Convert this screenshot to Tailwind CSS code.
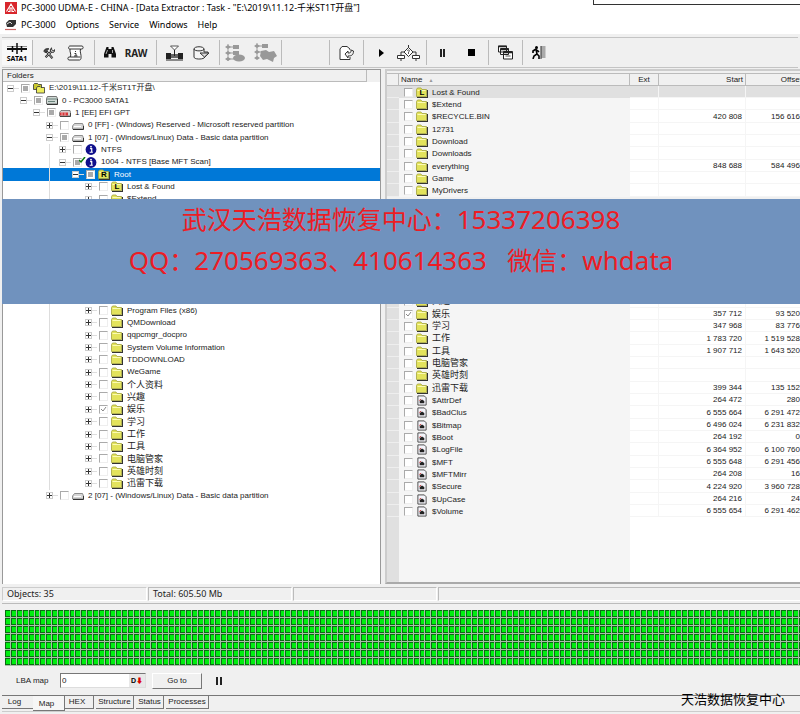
<!DOCTYPE html>
<html lang="zh-CN">
<head>
	<meta charset="UTF-8">
	<title>PC-3000 UDMA-E</title>
	<script src="https://cdn.jsdelivr.net/npm/@tailwindcss/browser@4"></script>
</head>
<body class="min-h-screen flex flex-col overflow-hidden bg-[#f0f0f0] text-[#222] font-['Liberation_Sans','Noto_Sans_CJK_SC',sans-serif] text-[8px] leading-3">

	<!-- Shared icons -->
	<svg class="hidden">
		<symbol id="folder" viewBox="0 0 12 11">
			<path d="M1 10.500h10.500V3" fill="none" stroke="#333" stroke-width="1.200"/>
			<path d="M.5 9.500V2.500l1-1.500h3.500l1 1.500h4.500v7z" fill="#e3e35c" stroke="#a3a33e" stroke-width=".8"/>
			<path d="M1.500 3.500h8" stroke="#fbfbb4"/>
		</symbol>
		<symbol id="folders" viewBox="0 0 12 11">
			<path d="M.5 6.500V1.500L1.500.500h3l1 1h3v5z" fill="#c9c92e" stroke="#333" stroke-width=".8"/>
			<path d="M3.500 10V5l1-1.500h2.500l1 1h3.500V10z" fill="#eeee5e" stroke="#333" stroke-width=".8"/>
		</symbol>
		<symbol id="disk" viewBox="0 0 12 11">
			<path d="M1.500 1.500h9l1 2v5.500h-11V3.500z" fill="#cfd8d4" stroke="#555" stroke-width=".8"/>
			<path d="M1 9.500h10.500V4" fill="none" stroke="#333"/>
			<path d="M1 4h10M2 6.500h7" stroke="#4d6b62" stroke-width=".8"/>
		</symbol>
		<symbol id="diskred" viewBox="0 0 12 11">
			<path d="M2 3.500h9l.5 2v3.500h-11v-3.500z" fill="#d8d0d0" stroke="#666" stroke-width=".8"/>
			<path d="M1 9.500h10.500V6" fill="none" stroke="#444"/>
			<path d="M1 5.500h8v3h-8z" fill="#d8373a"/>
			<path d="M3 5.500v3M6 5.500v3" stroke="#fff" stroke-width=".6"/>
		</symbol>
		<symbol id="part" viewBox="0 0 12 11">
			<path d="M.5 6l2-2.500h8l1 2.500v3h-11z" fill="#d6d6d6" stroke="#777" stroke-width=".8"/>
			<path d="M1 9.500h10.500V6" fill="none" stroke="#333"/>
			<path d="M2 6.500h7" stroke="#fff"/>
		</symbol>
		<symbol id="info" viewBox="0 0 12 12">
			<circle cx="6" cy="6" r="5.900" fill="#10108c"/>
			<path d="M5 5h1.800v4M4.500 9h3.500" fill="none" stroke="#fff" stroke-width="1.300"/>
			<circle cx="6" cy="2.900" r="1" fill="#fff"/>
		</symbol>
		<symbol id="file" viewBox="0 0 12 12">
			<path d="M1.500 1h7l2 2v8h-9z" fill="#f4f4fa" stroke="#444"/>
			<path d="M3.500 9V6.500L6 5l2.500 1.500V9z" fill="#222"/>
			<path d="M3 6l2-1.500" stroke="#c33"/>
		</symbol>
	</svg>

	<!-- Title bar -->
	<header class="bg-white font-['Noto_Sans','Noto_Sans_CJK_SC',sans-serif] text-[9px] text-black">
		<div class="flex h-4 items-center gap-1 pl-[5px]">
			<svg class="size-3" viewBox="0 0 12 12"><path d="M0 0h12v12H0z" fill="#d8262c"/><path d="M1.500 9.500L6 2l4.500 7.500M3 9.500h2V6h2v3.500h2" fill="none" stroke="#fff" stroke-width="1.100"/></svg>
			<h1 class="whitespace-nowrap">PC-3000 UDMA-E - CHINA - [Data Extractor : Task - "E:\2019\11.12-千米ST1T开盘"]</h1>
			<div class="ml-auto h-[5px] w-[26%] self-start border-b border-l border-[#333]"></div>
		</div>
		<nav class="flex h-[18px] items-center gap-2.5 pl-[5px]">
			<svg class="-mr-1.5 size-3" viewBox="0 0 12 12"><path d="M1 4l3-3h7v4l-3 3H2z" fill="#333"/><path d="M2 5l3-2 2 2" stroke="#ddd" fill="none"/><path d="M0 10.500h11" stroke="#c66" stroke-width="1.200"/></svg>
			<a href="#">PC-3000</a>
			<a href="#">Options</a>
			<a href="#">Service</a>
			<a href="#">Windows</a>
			<a href="#">Help</a>
		</nav>
	</header>

	<!-- Toolbar -->
	<div class="mx-0.5 mt-[3px] flex h-[31px] items-stretch border-y border-[#c4c4c4] py-0.5 font-['Noto_Sans',sans-serif]">
		<div class="flex w-[31px] items-center justify-center border-r border-[#bbb] bg-[#f8f8f8]">
			<button class="flex flex-col items-center text-[7px] leading-[7px] font-bold text-black" aria-label="SATA1">
				<svg class="h-3 w-5" viewBox="0 0 20 12"><path d="M0 6h20" stroke="#111" stroke-width="2"/><path d="M0 3.500h20" stroke="#777" stroke-width=".8"/><path d="M10 0v11" stroke="#111" stroke-width="1.500"/><path d="M5.500 3v6M14.500 3v6" stroke="#111" stroke-width="1.500"/></svg>
				SATA1
			</button>
		</div>
		<div class="flex w-[62px] items-center justify-around border-r border-[#bbb] px-1">
			<button aria-label="Utilities"><svg class="size-3" viewBox="0 0 14 14"><path d="M3 12l7-7M4 5l7 8" stroke="#222" stroke-width="2.600"/><path d="M3 12l7-7M4 5l7 8" stroke="#eee" stroke-width=".8"/><path d="M1 5c0-2 3-4 6-3L4.500 4.500 3 7z" fill="#444" stroke="#222" stroke-width=".8"/><path d="M10 1c-2 1-2 4 0 5s4 0 3.500-3L12 4.500 10 3z" fill="#ccc" stroke="#222"/></svg></button>
			<button aria-label="Report"><svg class="h-4 w-[17px]" viewBox="0 0 17 16"><path d="M3 1h12c1.500 0 1.500 3 0 3h-1.500c-1 3 1 5 .5 9 0 1-.5 2-1.500 2H2c-1.500 0-1.500-3 0-3h1.500c1-3-1-5-.5-8H2.500C1 4 1.500 1 3 1z" fill="#fff" stroke="#333"/><path d="M3 4h10.500M3.500 12H13M8.500 6v1M7.500 8.500h1.500v2.500M7 11h3.500" fill="none" stroke="#333"/></svg></button>
		</div>
		<div class="flex w-[62px] items-center justify-around border-r border-[#bbb] px-1">
			<button aria-label="Search"><svg class="h-[11px] w-3" viewBox="0 0 12 11"><path d="M2.500 0h2v2h3V0h2l2.500 7v3.500H7.500V7h-3v3.500H0V7z" fill="#111"/><path d="M3.500 3L2 7M8.500 3v3" stroke="#eee" stroke-width=".7"/></svg></button>
			<button class="text-[10px] font-bold text-[#222]">RAW</button>
		</div>
		<div class="flex w-[63px] items-center justify-around border-r border-[#bbb] px-1">
			<button aria-label="Load map"><svg class="h-4 w-[17px]" viewBox="0 0 17 16"><path d="M4.500 1h8l-4 4z" fill="#fff" stroke="#555"/><path d="M0 8h5v1h7V8h5v6h-5v-1H5v1H0z" fill="#222"/><path d="M5 9v4h7V9z" fill="#666"/><path d="M8.500 5v6M0 15h17" stroke="#222"/></svg></button>
			<button aria-label="Save map"><svg class="h-3.5 w-[17px]" viewBox="0 0 17 14"><path d="M1 3c0-3 10-3 10 0v3h4v2l-4 4c-2 1.500-10 1.500-10-1zM1 3c0 2.500 10 2.500 10 0" fill="#f6f6f6" stroke="#333"/><path d="M7 7h9l-4.500 4z" fill="#ddd" stroke="#333"/></svg></button>
		</div>
		<div class="flex w-[62px] items-center justify-around border-r border-[#bbb]">
			<button aria-label="Expand map" disabled><svg class="h-[18px] w-5" viewBox="0 0 20 18"><path d="M3 0v17M3 3h8M3 9h8M3 15h8" stroke="#999"/><path d="M0 3l3-2 3 2-3 2zM0 9l3-2 3 2-3 2zM0 15l3-2 3 2-3 2zM8 1h6v4H8zM8 7h6v4H8z" fill="#999"/><ellipse cx="14" cy="14" rx="6" ry="3.500" fill="#999"/></svg></button>
			<button aria-label="Build map" disabled><svg class="h-[19px] w-[23px]" viewBox="0 0 23 19"><path d="M3 0v14M3 3h8M3 9h8" stroke="#999"/><path d="M0 3l3-2 3 2-3 2zM0 9l3-2 3 2-3 2zM0 15l3-2 3 2-3 2zM8 1h6v4H8zM7 8l5-1 3 2 5-1 3 5-3 2-1 4-6-3-4 1-3-4z" fill="#999"/></svg></button>
		</div>
		<div class="w-12 border-r border-[#bbb]"></div>
		<div class="flex w-[34px] items-center justify-center border-r border-[#bbb]">
			<button aria-label="Export"><svg class="h-3.5 w-4" viewBox="0 0 16 14"><path d="M11 4V3L8 .5H3L1 3v10.500h10V11" fill="#fff" stroke="#333"/><path d="M6 8l3-3v2c3 0 3-1 3-3l2.500 1c0 4-2 5-5.500 5v2z" fill="#eee" stroke="#333"/></svg></button>
		</div>
		<div class="flex w-[63px] items-center justify-around border-r border-[#bbb] pl-2">
			<button aria-label="Start"><svg class="h-2 w-[5px]" viewBox="0 0 5 8"><path d="M0 0l5 4-5 4z" fill="#000"/></svg></button>
			<button aria-label="Step"><svg class="h-4 w-[23px]" viewBox="0 0 23 16"><path d="M11.500 0v3M7 7H4v4M16 7h3v4M4 13v3M19 13v3" stroke="#333" fill="none"/><path d="M11.500 2.500L16 7l-4.500 4.500L7 7zM.5 10.500h7v3h-7zM15.500 10.500h7v3h-7z" fill="#fff" stroke="#333"/><path d="M10.500 6c0-1.500 2-1.500 2 0l-1 1v2" fill="none" stroke="#333" stroke-width=".8"/></svg></button>
		</div>
		<div class="flex w-[62px] items-center justify-around border-r border-[#bbb] px-0.5">
			<button aria-label="Pause"><svg class="h-2 w-[5px]" viewBox="0 0 5 8"><path d="M0 0h2v8H0zM3 0h2v8H3z" fill="#222"/></svg></button>
			<button aria-label="Stop"><svg class="size-[7px]" viewBox="0 0 7 7"><path d="M0 0h7v7H0z" fill="#000"/></svg></button>
		</div>
		<div class="flex w-[34px] items-center justify-center border-r border-[#bbb]">
			<button aria-label="Windows"><svg class="size-[15px]" viewBox="0 0 15 15"><path d="M.5 1h8v6h-8zM2.500 3.500h8v6h-8zM5.500 6.500h9v7.500h-9z" fill="#fff" stroke="#222"/><path d="M0 1.500h9M2.500 4.500h8.500M5.500 7.500h9" stroke="#222" stroke-width="1.600"/><path d="M7.500 11h5" stroke="#555"/></svg></button>
		</div>
		<div class="flex w-8 items-center justify-center">
			<button aria-label="Exit"><svg class="h-[13px] w-3.5" viewBox="0 0 14 13"><circle cx="4.500" cy="1.500" r="1.500" fill="#000"/><path d="M4 3l-3 2v2M4 3l1 5-3 2-1 3M5 8l2 2v3M5 4l2 2" fill="none" stroke="#000" stroke-width="1.600"/><path d="M9 0h4.500v12H9z" fill="#aaa"/><path d="M9 0v13" stroke="#333"/></svg></button>
		</div>
	</div>

	<main class="relative mt-px flex flex-1 gap-1 pl-0.5">
		<!-- Folder tree -->
		<section class="w-[379px] shrink-0 border-t border-x border-[#999] bg-white">
			<div class="flex h-3 bg-[#f0f0f0]">
				<h2 class="w-[364px] border-r border-b border-[#bbb] pl-1">Folders</h2>
			</div>
			<div id="tree" class="grid h-[420px] auto-rows-[minmax(0,1fr)]"></div>
		</section>

		<!-- File list -->
		<section class="flex min-w-0 flex-1 flex-col overflow-hidden border-2 border-r-0 border-[#aaa] border-t-[#ccc] border-l-[#ccc] bg-[#f0f0f0]">
			<div class="flex flex-1 flex-col pt-0.5">
				<table class="w-[calc(100%+3px)] table-fixed border-separate border-spacing-0 whitespace-nowrap">
					<thead>
						<tr class="h-[13px] bg-[#f0f0f0] leading-[11px]">
							<th class="w-3 border-y border-r border-[#bbb] p-0"></th>
							<th class="border-y border-r border-[#bbb] p-0 pl-0.5 text-left font-normal">Name <span class="ml-1 text-[5px] leading-none text-[#999]">▲</span></th>
							<th class="w-[29px] border-y border-r border-[#bbb] p-0 text-center font-normal">Ext</th>
							<th class="w-[87px] border-y border-r border-[#bbb] p-0 pr-0.5 text-right font-normal">Start</th>
							<th class="w-[57px] border-y border-r border-[#bbb] p-0 text-right font-normal">Offset</th>
						</tr>
					</thead>
					<tbody id="files" class="leading-[11px] [&>tr]:h-3 [&>tr:nth-child(3n)]:h-[13px]"></tbody>
				</table>
				<div class="flex w-[calc(100%+3px)] flex-1">
					<div class="w-3 bg-[#e0e0e0]"></div>
					<div class="flex-1 bg-[#f5f5f5]"></div>
					<div class="w-[173px] bg-white"></div>
				</div>
			</div>
		</section>

		<!-- Contact banner -->
		<aside class="absolute top-[130px] right-0 left-0.5 flex h-[105px] flex-col items-center bg-[#7092be] text-[25px] leading-[41px] whitespace-pre text-[#ed1c24] font-['Noto_Sans','Noto_Sans_CJK_SC',sans-serif]">
			<p>武汉天浩数据恢复中心：<span class="text-[26px]">15337206398</span></p>
			<p><span class="text-[26px]">QQ</span>：<span class="text-[26px]">270569363</span>、<span class="text-[26px]">410614363   </span>微信：<span class="text-[26px]">whdata</span></p>
		</aside>
	</main>

	<!-- Status bar -->
	<div class="mt-[3px] ml-0.5 flex h-[14px] gap-px font-['Noto_Sans',sans-serif] text-[9px]">
		<div class="w-[145px] border border-[#ccc] border-r-white border-b-white pl-1">Objects: 35</div>
		<div class="w-[144px] border border-[#bbb] border-r-white border-b-white pl-1">Total: 605.50 Mb</div>
		<div class="w-[144px] border border-[#bbb] border-r-white border-b-white"></div>
		<div class="flex-1 border border-r-0 border-[#bbb] border-b-white"></div>
	</div>

	<!-- Sector map -->
	<div class="mt-[2px] ml-0.5 border-t border-[#bbb] pt-1.5 pl-[3px]">
		<svg class="block h-14 w-full">
			<defs>
				<pattern id="cells" width="35" height="8" patternUnits="userSpaceOnUse">
					<path d="M0 0h35v8H0z" fill="#a9bfa9"/>
					<path d="M0 0h5v7H0zM6 0h5v7H6zM12 0h5v7h-5zM18 0h5v7h-5zM24 0h5v7h-5zM30 0h4v7h-4z" fill="#0a6b12"/>
					<path d="M1 1h4v5H1zM7 1h4v5H7zM13 1h4v5h-4zM19 1h4v5h-4zM25 1h4v5h-4zM31 1h3v5h-3z" fill="#00ee10"/>
				</pattern>
			</defs>
			<rect width="100%" height="100%" fill="url(#cells)"/>
		</svg>
	</div>
	<form class="flex h-[29px] items-center pl-4">
		<label for="lba" class="w-11">LBA map</label>
		<div class="flex h-[15px] w-[86px] items-center border border-[#777] border-r-[#ddd] border-b-[#ddd] bg-white">
			<input id="lba" type="text" value="0" class="min-w-0 flex-1 pl-px outline-none">
			<button type="button" class="h-full bg-[#e8e8e8] px-0.5 text-[7px] leading-3 font-bold text-black">D<span class="text-[#d00]">⬇</span></button>
		</div>
		<button type="button" class="ml-1.5 h-4 w-[50px] border border-white border-r-[#777] border-b-[#777]">Go to</button>
		<button type="button" class="ml-3.5" aria-label="Pause"><svg class="h-2 w-[6px]" viewBox="0 0 6 8"><path d="M0 0h2v8H0zM4 0h2v8H4z" fill="#222"/></svg></button>
	</form>

	<!-- Bottom tabs -->
	<footer class="relative ml-0.5 flex h-[19px] items-start border-t border-[#777] after:absolute after:inset-x-0 after:bottom-0.5 after:-z-10 after:h-px after:bg-[#ccc]">
		<button class="h-[13px] w-[31px] border-b border-[#777] pr-1.5">Log</button>
		<button class="h-[15px] w-8 border-r border-b border-[#777] bg-[#f6f6f6] pt-0.5 pr-1">Map</button>
		<button class="h-[13px] w-[29px] border-r border-b border-[#777] pr-1">HEX</button>
		<button class="ml-0.5 h-[13px] w-[38px] border-r border-b border-[#777]">Structure</button>
		<button class="ml-0.5 h-[13px] w-7 border-r border-b border-[#777]">Status</button>
		<button class="ml-0.5 h-[13px] w-[43px] border-r border-b border-[#777]">Processes</button>
		<p class="absolute -top-1 right-[15px] text-[13px] leading-4 text-black">天浩数据恢复中心</p>
	</footer>

	<script>
		// [level, expander, checkbox state, icon, label, letter on the icon]
		const tree = [
			[0, '-', 'part', 'folders', 'E:\\2019\\11.12-千米ST1T开盘\\'],
			[1, '-', 'part', 'disk', '0 - PC3000 SATA1'],
			[2, '-', 'part', 'diskred', '1 [EE] EFI GPT'],
			[3, '+', '', 'part', '0 [FF] - (Windows) Reserved - Microsoft reserved partition'],
			[3, '-', 'part', 'part', '1 [07] - (Windows/Linux) Data - Basic data partition'],
			[4, '+', '', 'info', 'NTFS'],
			[4, '-', 'scanned', 'info', '1004 - NTFS [Base MFT Scan]'],
			[5, '-', 'part', 'folder', 'Root', 'R'],
			[6, '+', '', 'folder', 'Lost & Found', 'L'],
			[6, '+', '', 'folder', '$Extend'],
		];
		// Rows that the banner covers stay empty
		const covered = Array(8).fill(null);
		covered.forEach(() => tree.push(null));
		['Program Files (x86)', 'QMDownload', 'qqpcmgr_docpro', 'System Volume Information', 'TDDOWNLOAD', 'WeGame',
			'个人资料', '兴趣', '娱乐', '学习', '工作', '工具', '电脑管家', '英雄时刻', '迅雷下载',
		].forEach(name => tree.push([6, '+', name === '娱乐' ? 'on' : '', 'folder', name]));
		tree.push([3, '+', '', 'part', '2 [07] - (Windows/Linux) Data - Basic data partition']);

		// [name, start, offset]
		const files = [
			['Lost & Found'],
			['$Extend'],
			['$RECYCLE.BIN', '420 808', '156 616'],
			['12731'],
			['Download'],
			['Downloads'],
			['everything', '848 688', '584 496'],
			['Game'],
			['MyDrivers'],
			...covered,
			['兴趣'],
			['娱乐', '357 712', '93 520'],
			['学习', '347 968', '83 776'],
			['工作', '1 783 720', '1 519 528'],
			['工具', '1 907 712', '1 643 520'],
			['电脑管家'],
			['英雄时刻'],
			['迅雷下载', '399 344', '135 152'],
			['$AttrDef', '264 472', '280'],
			['$BadClus', '6 555 664', '6 291 472'],
			['$Bitmap', '6 496 024', '6 231 832'],
			['$Boot', '264 192', '0'],
			['$LogFile', '6 364 952', '6 100 760'],
			['$MFT', '6 555 648', '6 291 456'],
			['$MFTMirr', '264 208', '16'],
			['$Secure', '4 224 920', '3 960 728'],
			['$UpCase', '264 216', '24'],
			['$Volume', '6 555 654', '6 291 462'],
		];
		const FIRST_SYSTEM_FILE = 25;

		function icon(id, letter) {
			return `<span class="relative flex shrink-0"><svg class="h-[11px] w-3"><use href="#${id}"/></svg>
				${letter ? `<span class="absolute inset-0 text-center text-[8px] font-bold leading-3 text-black">${letter}</span>` : ''}</span>`;
		}

		function checkbox(id, state) {
			const fill = state === 'part' || state === 'scanned' ? 'bg-[#aaa] shadow-[inset_0_0_0_1px_#fff]' : 'bg-white';
			return `<span class="relative flex shrink-0">
				<input type="checkbox" id="${id}" ${state === 'on' ? 'checked' : ''} class="size-[9px] appearance-none border border-[#aaa] border-r-[#eee] border-b-[#eee] ${fill}">
				${state === 'on' ? '<svg class="pointer-events-none absolute inset-0 size-[9px]" viewBox="0 0 9 9"><path d="M2 4l2 2 3-4" fill="none" stroke="#888"/></svg>' : ''}
				${state === 'scanned' ? '<svg class="pointer-events-none absolute -top-px left-1.5 size-[7px]" viewBox="0 0 7 7"><path d="M0 3l2 2 4-5" fill="none" stroke="#0a7a0a" stroke-width="1.5"/></svg>' : ''}</span>`;
		}

		// Chinese names are drawn one size up from the Latin ones
		function label(id, name) {
			const size = /^[\u4e00-\u9fff]/.test(name) ? 'text-[9px]' : '';
			return `<label for="${id}" class="pl-1 ${size}">${name.replace('&', '&amp;')}</label>`;
		}

		document.getElementById('tree').innerHTML = tree.map((row, i) => {
			if (!row) return '<div></div>';
			const [level, exp, state, ic, name, letter] = row;
			let indent = '';
			for (let k = 0; k < level; k++) {
				indent += `<span class="flex w-[13px] shrink-0 self-stretch pl-[3px]">${k === 3 ? '<span class="w-px bg-[#ddd]"></span>' : ''}</span>`;
			}
			const selected = name === 'Root' ? 'bg-[#0078d7] text-white' : '';
			return `<div class="flex items-center pl-1 whitespace-nowrap ${selected}">${indent}
				<button class="flex size-[7px] shrink-0 items-center justify-center border border-[#ccc] bg-white" aria-label="Toggle">
					<svg class="size-[5px]" viewBox="0 0 5 5"><path d="${exp === '+' ? 'M0 2.5h5M2.5 0v5' : 'M0 2.5h5'}" stroke="#333"/></svg>
				</button>
				<span class="mr-0.5 h-px w-[5px] shrink-0 bg-[#ddd]"></span>
				${checkbox('t' + i, state)}
				<span class="w-[3px] shrink-0"></span>${icon(ic, letter)}
				${label('t' + i, name)}</div>`;
		}).join('');

		document.getElementById('files').innerHTML = files.map((row, i) => {
			if (!row) return '<tr><td colspan="5"></td></tr>';
			const [name, start = '', offset = ''] = row;
			const bg = i === 0 ? 'bg-[#e0e0e0]' : 'bg-white';
			const nameBg = i === 0 ? 'bg-[#e0e0e0]' : 'bg-[#f5f5f5]';
			return `<tr class="${bg}">
				<td class="border-b border-[#eee] bg-[#e0e0e0] p-0"></td>
				<td class="p-0 ${nameBg}"><div class="flex h-[11px] items-center pl-[5px]">
					${checkbox('f' + i, name === '娱乐' ? 'on' : '')}<span class="w-[3px]"></span>${icon(i >= FIRST_SYSTEM_FILE ? 'file' : 'folder', i === 0 ? 'L' : '')}
					${label('f' + i, name)}</div></td>
				<td class="border-r border-b border-[#f5f5f5] p-0"></td>
				<td class="border-r border-b border-[#f5f5f5] p-0 pr-[3px] text-right">${start}</td>
				<td class="border-b border-[#f5f5f5] p-0 pr-[3px] text-right">${offset}</td></tr>`;
		}).join('');
	</script>
</body>
</html>
